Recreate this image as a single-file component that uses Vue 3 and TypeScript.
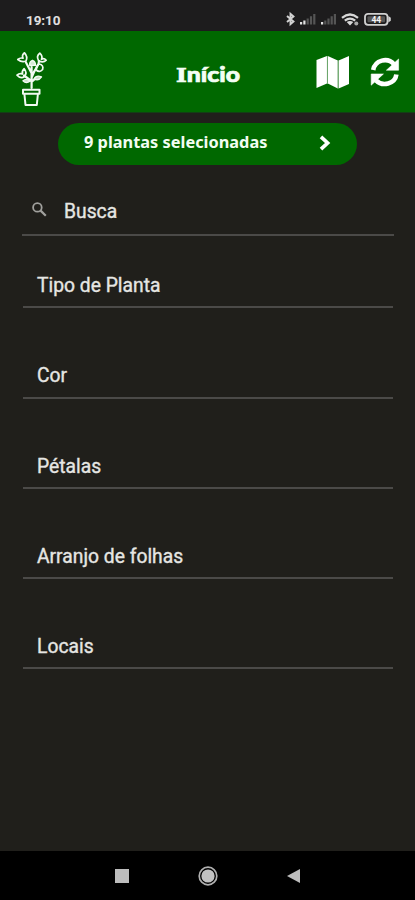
<script setup lang="ts">
interface Field {
  id: string
  label: string
}

const selectedCount: number = 9

const fields: Field[] = [
  { id: 'type', label: 'Tipo de Planta' },
  { id: 'color', label: 'Cor' },
  { id: 'petals', label: 'Pétalas' },
  { id: 'leaves', label: 'Arranjo de folhas' },
  { id: 'places', label: 'Locais' },
]
</script>

<template>
  <div class="screen">
    <div class="status">
      <span class="clock">19:10</span>
      <svg class="indicators" width="108" height="16" viewBox="0 0 108 16" fill="none">
        <path d="M2 5l6.5 5.5-3 2.7V2.8l3 2.7L2 11" stroke="#d2d2d2" stroke-width="1.9" />
        <g fill="#e2e2e2">
          <path d="M15 11h2.2v2.5H15zM18.3 9.5h2.2v4h-2.2z" />
          <path d="M36 11h2.2v2.5H36z" />
        </g>
        <g fill="#555">
          <path d="M21.6 7.5h2.2v6h-2.2zM24.9 5.2h2.2v8.3h-2.2zM28.2 3h2.2v10.5h-2.2z" />
          <path d="M39.2 9.5h2.2v4h-2.2zM42.4 7.5h2.2v6h-2.2zM45.6 5.2h2.2v8.3h-2.2zM48.8 3H51v10.5h-2.2z" />
        </g>
        <path d="M57 6.8q8-6.6 16 0M59.8 9.6q5.2-4 10.4 0" stroke="#d8d8d8" stroke-width="2.2" />
        <path d="M61.7 11q3.3-2.2 6.6 0L65 14.4z" fill="#d8d8d8" />
        <circle cx="71.3" cy="12.5" r="2" fill="#aaa" />
        <rect x="80" y="2.8" width="22.5" height="11" rx="3" stroke="#d0d0d0" stroke-width="1.8" />
        <rect x="82.5" y="5.3" width="17.5" height="6" rx="1" fill="#555" />
        <path d="M103.3 5l2.5 1.8v3l-2.5 1.8z" fill="#d0d0d0" />
        <text x="91.3" y="11.6" class="charge" text-anchor="middle">44</text>
      </svg>
    </div>

    <header class="header">
      <svg class="plant" width="34" height="58" viewBox="0 0 34 58" fill="none" stroke="#f2faf2" stroke-linejoin="round" stroke-linecap="round">
        <path d="M16.6 40V19M16.5 25L11 14.5M16.8 29Q19 23 22 19Q24 16 24 13M16.3 33L9 27.5M16.6 34L21 30" stroke-width="2.2" />
        <path d="M11 13Q7 15 2.8 11.5Q5 9.5 8 10.2Q6.5 7 9.5 4.8Q13 8.5 11 13z" stroke-width="1.7" />
        <path d="M14.8 17.5Q14 13.5 17.5 12.3Q20.5 13.5 20.6 17.2z" fill="#d5ead5" stroke-width="1.4" />
        <path d="M23.5 12.5Q21 8 24.8 5.2Q28 8 26.5 11.3Q29 9.8 31.2 12.2Q28 15.5 23.5 12.5z" stroke-width="1.7" />
        <path d="M24 16Q29 17 27.6 21.5Q24.5 25 21.2 22Q20.8 18 24 16z" stroke-width="1.7" />
        <path d="M9.5 28.5Q6 31.5 2 27.2Q4.5 24.8 7.5 26Q6.5 23 9.2 20.7Q12.5 24.5 9.5 28.5z" stroke-width="1.7" />
        <path d="M15 33.2Q11 36 8 32.7Q11.5 29.8 15 33.2zM19 31Q21.5 26.5 26.5 29Q24 33 19 31z" fill="#c5e0c5" stroke-width="1.4" />
        <path d="M8 41.8h16.5v4H8zM9.5 47l1 10h11.3l1-10" stroke-width="2" />
      </svg>
      <svg class="title" width="66" height="26" viewBox="0 0 66 26">
        <text x="1" y="18.7" textLength="64" lengthAdjust="spacingAndGlyphs"><tspan class="initial">I</tspan>nício</text>
      </svg>
      <div class="actions">
        <svg width="34" height="34" viewBox="0 0 34 34">
          <path d="M.5 5L11 1v27.5L.5 33zM11.8 1l10 4.5v28l-10-5zM22.6 5.5L33 1v28l-10.4 4.5z" fill="#fff" />
          <path d="M11.4 1v28M22.2 5.5v28" stroke="#85b585" stroke-width=".8" />
        </svg>
        <svg width="30" height="30" viewBox="0 0 30 30">
          <path d="M3.2 13C5 3 17.5 0 24 7.2M26.4 17.5C25 27 12.5 30 6 23.3" fill="none" stroke="#fff" stroke-width="4.6" />
          <path d="M28.6 2v11.2H16.4zM1.2 28.2V17h12.2z" fill="#fff" stroke="#fff" stroke-width=".6" stroke-linejoin="round" />
        </svg>
      </div>
    </header>

    <main class="content">
      <button class="pill" type="button">
        <span>{{ selectedCount }} plantas selecionadas</span>
        <svg width="12" height="16" viewBox="0 0 12 16">
          <path d="M2 1.8L8.6 8L2 14.2" fill="none" stroke="#fff" stroke-width="3.7" />
        </svg>
      </button>

      <div class="search">
        <svg width="16" height="16" viewBox="0 0 16 16" fill="none" stroke="#a0a09d">
          <circle cx="5.4" cy="5.4" r="4.3" stroke-width="1.8" />
          <path d="M8.6 8.6l5.2 5.2" stroke-width="2.2" />
        </svg>
        <span>Busca</span>
      </div>

      <div class="fields">
        <div v-for="field in fields" :key="field.id" class="field">
          <span>{{ field.label }}</span>
        </div>
      </div>
    </main>

    <nav class="navigation">
      <svg width="14" height="14" viewBox="0 0 14 14"><path d="M0 0h14v14H0z" fill="#bdbdbd" /></svg>
      <svg width="20" height="20" viewBox="0 0 20 20">
        <circle cx="10" cy="10" r="8.8" fill="none" stroke="#b0b0b0" stroke-width="1.7" />
        <circle cx="10" cy="10" r="6.6" fill="#c2c2c2" />
      </svg>
      <svg width="13" height="14" viewBox="0 0 13 14"><path d="M0 7L13 0v14z" fill="#bdbdbd" /></svg>
    </nav>
  </div>
</template>

<style>
body {
  background: #201f1b;
}
</style>

<style scoped>
.screen {
  width: 415px;
  height: 900px;
  display: flex;
  flex-direction: column;
  overflow: hidden;
  background: #201f1b;
  color: #e6e6e3;
  font-family: Roboto, sans-serif;
}

.status {
  height: 31px;
  box-sizing: border-box;
  padding: 11px 22px 0 26px;
  display: flex;
  justify-content: space-between;
  align-items: flex-start;
  background: #1d1c1d;
}

.clock {
  font: 700 13.5px/18px Roboto, sans-serif;
  letter-spacing: -0.1px;
  color: #e0e0e0;
}

.charge {
  font: 700 8.5px Roboto, sans-serif;
  fill: #f2f2f2;
}

.header {
  height: 82px;
  box-sizing: border-box;
  padding: 0 15px;
  display: grid;
  grid-template-columns: 160px 66px 1fr;
  align-items: start;
  background: #006800;
  border-bottom: 1px solid #124014;
}

.plant {
  margin-top: 17px;
}

.title {
  margin-top: 32px;
}

.title text {
  font: 900 20px Lato, sans-serif;
  fill: #f4fff4;
  stroke: #f4fff4;
  stroke-width: 0.7px;
}

.title .initial {
  font: 700 18.5px 'DejaVu Serif', serif;
}

.actions {
  display: flex;
  justify-content: flex-end;
  align-items: center;
  gap: 20px;
  padding-top: 24px;
}

.content {
  flex: 1;
}

.pill {
  width: 299px;
  height: 42px;
  margin: 10px 0 0 58px;
  padding: 0 26px 3px 26px;
  border: 0;
  border-radius: 21px;
  display: flex;
  align-items: center;
  justify-content: space-between;
  background: #006800;
  color: #f2fdf2;
  font: 700 16.35px/22px 'Noto Sans', sans-serif;
}

.pill span {
  margin-top: -1px;
}

.pill svg {
  margin-top: 1px;
}

.search {
  width: 372px;
  height: 71px;
  box-sizing: border-box;
  margin-left: 22px;
  padding: 34px 0 0 10px;
  display: flex;
  align-items: flex-start;
  gap: 16px;
  border-bottom: 2px solid #4b4a48;
  font-size: 19.3px;
  line-height: 25px;
  -webkit-text-stroke: 0.35px currentColor;
}

.search svg {
  margin-top: 3px;
}

.fields {
  margin: 0 22px 0 23px;
  padding-top: 37px;
  display: grid;
  gap: 55px;
}

.field {
  height: 35.3px;
  box-sizing: border-box;
  padding-left: 14px;
  border-bottom: 2px solid #4b4a48;
  font-size: 19.3px;
  line-height: 26px;
  -webkit-text-stroke: 0.35px currentColor;
}

.navigation {
  height: 49px;
  display: flex;
  justify-content: center;
  align-items: center;
  gap: 69px;
  background: #000;
}
</style>
